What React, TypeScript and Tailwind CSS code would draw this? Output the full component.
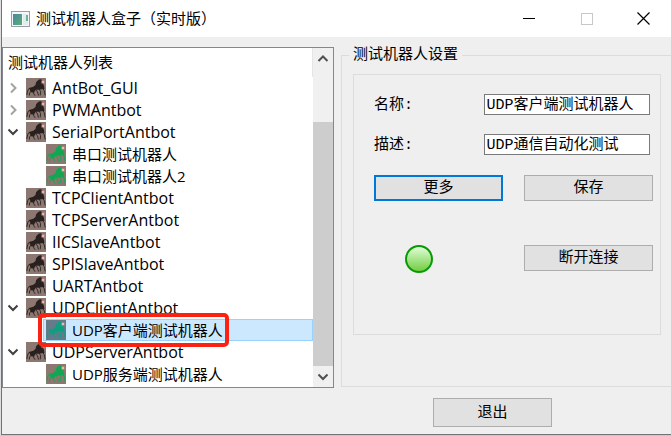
import React from "react";

type Node = { name: string; depth: 0 | 1; state?: "open" | "closed"; selected?: boolean };

const nodes: Node[] = [
  { name: "AntBot_GUI", depth: 0, state: "closed" },
  { name: "PWMAntbot", depth: 0, state: "closed" },
  { name: "SerialPortAntbot", depth: 0, state: "open" },
  { name: "串口测试机器人", depth: 1 },
  { name: "串口测试机器人2", depth: 1 },
  { name: "TCPClientAntbot", depth: 0 },
  { name: "TCPServerAntbot", depth: 0 },
  { name: "IICSlaveAntbot", depth: 0 },
  { name: "SPISlaveAntbot", depth: 0 },
  { name: "UARTAntbot", depth: 0 },
  { name: "UDPClientAntbot", depth: 0, state: "open" },
  { name: "UDP客户端测试机器人", depth: 1, selected: true },
  { name: "UDPServerAntbot", depth: 0, state: "open" },
  { name: "UDP服务端测试机器人", depth: 1 },
];

function AntIcon({ body, ground }: { body: string; ground: string }) {
  return (
    <svg width="20" height="20" viewBox="0 0 20 20" className="shrink-0" aria-hidden="true">
      <rect width="20" height="20" fill={ground} />
      <path d="M6 9.8 L9.5 7 L10 4.5 L11.2 3 L13 1.6 L15 1.2 L16.4 2.6 L17 5.5 L18 8 L18.4 11 L15.5 11.3 L12.5 11.8 L9 11.8 Z" fill={body} />
      <path d="M3.2 10 L6.5 9 L9.5 9.3 L9.5 12 L8 14.4 L5.6 14.6 L4.2 12.8 Z" fill={body} />
      <g fill="none" stroke={body} strokeWidth="0.9">
        <path d="M5 10.2 L2.6 10.8 L1.6 13 L0.8 17" />
        <path d="M5 13 L3.6 15 L3.4 17.5" />
        <path d="M7.5 13.5 L7.8 16 L9.2 17.8" />
        <path d="M9.5 11.5 L11.6 14 L12.4 17.6" />
        <path d="M13 11 L14.6 13.4 L14.2 17.4" />
        <path d="M16.5 10 L18.2 12.6 L19.2 17.4" />
      </g>
      <circle cx="17" cy="4" r="2.2" fill="#d98f8c" opacity="0.5" />
      <circle cx="17" cy="4" r="0.9" fill="#ffd9d6" />
    </svg>
  );
}

function Chevron({ dir, color }: { dir: "up" | "down" | "right"; color: string }) {
  const d = dir === "up" ? "M1.5 8 L6 3.5 L10.5 8" : dir === "down" ? "M1.5 3.5 L6 8 L10.5 3.5" : "M4 1.5 L8.5 6 L4 10.5";
  return (
    <svg width="12" height="12" viewBox="0 0 12 12" fill="none" stroke={color} strokeWidth="2" aria-hidden="true">
      <path d={d} />
    </svg>
  );
}

function TreeRow({ node }: { node: Node }) {
  const child = node.depth === 1;
  const body = node.selected ? "#0f9f80" : child ? "#14a552" : "#29211f";
  return (
    <li
      role="treeitem"
      aria-selected={!!node.selected}
      aria-expanded={node.state ? node.state === "open" : undefined}
      className={"relative flex h-[22px] items-center " + (child ? "pl-10" : "pl-1 text-base")}
    >
      {!child && (
        <span className="flex w-[18px] shrink-0 items-center">
          {node.state && (
            <Chevron dir={node.state === "open" ? "down" : "right"} color={node.state === "open" ? "#404040" : "#a3a3a3"} />
          )}
        </span>
      )}
      <span
        className={
          "flex h-[22px] grow items-center gap-1.5 border " +
          (child ? "pl-[2px] " : "") +
          (node.selected ? "border-[#99d1ff] bg-[#cce8ff]" : "border-transparent")
        }
      >
        <AntIcon body={body} ground={node.selected ? "#657b8c" : "#8c7871"} />
        <span className="whitespace-nowrap">{node.name}</span>
      </span>
      {node.selected && (
        <span className="pointer-events-none absolute -top-1.5 left-[35px] z-10 h-[34px] w-[191px] rounded-[5px] border-4 border-[#fb2213]" />
      )}
    </li>
  );
}

function PushButton({ children, primary, className = "h-[26px]" }: { children: React.ReactNode; primary?: boolean; className?: string }) {
  return (
    <button
      type="button"
      className={
        "flex items-center justify-center bg-[#e1e1e1] pt-0.5 leading-5 " +
        (primary ? "border-2 border-[#0078d7] " : "border border-[#adadad] ") +
        className
      }
    >
      {children}
    </button>
  );
}

function Field({ id, label, value }: { id: string; label: string; value: string }) {
  return (
    <div className="flex h-[21px] items-center justify-between pr-[3px]">
      <label htmlFor={id} className="pt-1">{label}</label>
      <input id={id} defaultValue={value} className="h-[21px] w-[60%] border border-[#7a7a7a] bg-white px-px pt-1" />
    </div>
  );
}

export default function App() {
  return (
    <div className="min-h-[436px] overflow-hidden border-b border-l border-b-[#c8c8c8] border-l-[#dedede] text-[15px] text-black">
      <div className="flex min-h-[435px] flex-col border-b border-l border-[#707478] bg-[#efefef]">
        <header className="flex h-[37px] items-center bg-white pl-[9px] font-['Open_Sans','Noto_Sans_CJK_SC',sans-serif]">
          <svg width="19" height="16" viewBox="0 0 19 16" aria-hidden="true">
            <defs>
              <linearGradient id="screen" x1="0" y1="0" x2="1" y2="1">
                <stop offset="0" stopColor="#4b86a8" />
                <stop offset="1" stopColor="#58b070" />
              </linearGradient>
            </defs>
            <rect x="0.5" y="0.5" width="18" height="15" fill="#f4f6f8" stroke="#9a9fa6" />
            <rect x="2" y="3" width="9" height="11" fill="url(#screen)" />
            <rect x="12" y="3" width="5" height="11" fill="#e3ebf2" />
            <rect x="15" y="4" width="2" height="6" fill="#6bb58c" />
          </svg>
          <h1 className="ml-1.5 grow whitespace-nowrap">测试机器人盒子（实时版）</h1>
          <div className="flex h-9 items-center">
            <button type="button" aria-label="最小化" className="flex w-[58px] justify-center">
              <svg width="12" height="12" viewBox="0 0 12 12" aria-hidden="true"><path d="M0 5.5H12" stroke="#000" /></svg>
            </button>
            <button type="button" aria-label="最大化" disabled className="flex w-[58px] justify-center">
              <svg width="12" height="12" viewBox="0 0 12 12" aria-hidden="true"><rect x="0.5" y="0.5" width="11" height="11" fill="none" stroke="#c8c8c8" /></svg>
            </button>
            <button type="button" aria-label="关闭" className="flex w-[55px] justify-center">
              <svg width="13" height="13" viewBox="0 0 13 13" aria-hidden="true"><path d="M0.5 0.5L12.5 12.5M12.5 0.5L0.5 12.5" stroke="#000" strokeWidth="1.2" /></svg>
            </button>
          </div>
        </header>

        <main className="flex gap-[7px] pt-[10px]">
          <section className="flex h-[341px] w-[332px] shrink-0 border border-[#828790] bg-white font-['Open_Sans','Noto_Sans_CJK_SC',sans-serif]">
            <div className="flex min-w-0 grow flex-col">
              <h2 className="flex h-[29px] items-center border-r border-[#e5e5e5] pl-[5px]">测试机器人列表</h2>
              <ul role="tree">
                {nodes.map((n) => (
                  <TreeRow key={n.name} node={n} />
                ))}
              </ul>
            </div>
            <div className="flex w-5 flex-col bg-[#f0f0f0]">
              <button type="button" aria-label="向上滚动" className="flex h-[21px] items-center justify-center">
                <Chevron dir="up" color="#505050" />
              </button>
              <div className="grow pt-[53px]">
                <div className="h-full bg-[#cdcdcd]" />
              </div>
              <button type="button" aria-label="向下滚动" className="flex h-[21px] items-center justify-center">
                <Chevron dir="down" color="#505050" />
              </button>
            </div>
          </section>

          <div className="grow font-['Liberation_Mono','Noto_Sans_CJK_SC',monospace]">
            <fieldset className="h-[340px] border border-r-0 border-[#dcdcdc] pl-[11px] pr-[10px]">
              <legend className="-ml-1 h-4 px-1 leading-[18px]">测试机器人设置</legend>
              <div className="mt-[11px] flex h-[261px] flex-col border border-[#dcdcdc] pl-5 pr-[7px] pt-[19px]">
                <div className="flex flex-col gap-[19px]">
                  <Field id="bot-name" label="名称:" value="UDP客户端测试机器人" />
                  <Field id="bot-desc" label="描述:" value="UDP通信自动化测试" />
                </div>
                <div className="mt-5 grid grid-cols-2 gap-x-[21px] gap-y-11">
                  <PushButton primary>更多</PushButton>
                  <PushButton>保存</PushButton>
                  <svg width="28" height="28" viewBox="0 0 28 28" className="ml-[31px]" role="img" aria-label="已连接">
                    <defs>
                      <linearGradient id="lamp" x1="0" y1="0" x2="0" y2="1">
                        <stop offset="0" stopColor="#e4ffdc" />
                        <stop offset="1" stopColor="#6dcb3d" />
                      </linearGradient>
                    </defs>
                    <circle cx="14" cy="14" r="13" fill="url(#lamp)" stroke="#079a07" strokeWidth="2" />
                  </svg>
                  <PushButton>断开连接</PushButton>
                </div>
              </div>
            </fieldset>
          </div>
        </main>

        <footer className="flex pl-[431px] pt-[10px] font-['Liberation_Mono','Noto_Sans_CJK_SC',monospace]">
          <PushButton className="h-[29px] w-[119px]">退出</PushButton>
        </footer>
      </div>
    </div>
  );
}
